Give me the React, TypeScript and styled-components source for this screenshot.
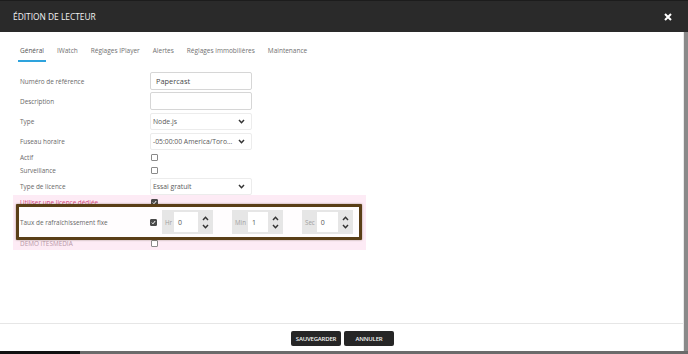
import React from 'react';
import styled, { createGlobalStyle } from 'styled-components';

const GlobalStyle = createGlobalStyle`
  html, body {
    margin: 0;
    padding: 0;
    background: #ffffff;
  }
  body {
    font-family: 'Open Sans', 'Liberation Sans', sans-serif;
  }
`;

interface RowProps {
  h: number;
}

interface TabProps {
  active?: boolean;
}

interface LabelProps {
  tone?: 'normal' | 'alert' | 'faded';
}

const Frame = styled.div`
  display: flex;
  flex-direction: column;
  width: 688px;
  height: 354px;
  overflow: hidden;
`;

const Header = styled.div`
  display: flex;
  align-items: center;
  justify-content: space-between;
  height: 32px;
  padding: 0 16px 0 13px;
  background: #2a2a2a;
  box-sizing: border-box;
  border-top: 1px solid #1c1c1c;
`;

const Title = styled.div`
  color: #f2f2f2;
  font-size: 8.4px;
  text-transform: uppercase;
`;

const Middle = styled.div`
  display: flex;
  flex: 1;
  min-height: 0;
`;

const Panel = styled.div`
  display: flex;
  flex-direction: column;
  flex: 1;
  background: #ffffff;
`;

const Scrollbar = styled.div`
  width: 4px;
  background: #8a8a8a;
  border-left: 1px solid #e9e9e9;
`;

const Tabs = styled.div`
  display: flex;
  gap: 9px;
  margin: 13px 0 0 18px;
`;

const Tab = styled.div<TabProps>`
  padding: 0 2px 3px 2px;
  line-height: 12px;
  font-size: 6.5px;
  color: ${({ active }) => (active ? '#555555' : '#707070')};
  border-bottom: 2px solid ${({ active }) => (active ? '#2ea3dd' : 'transparent')};
`;

const Form = styled.div`
  display: flex;
  flex-direction: column;
  margin-top: 9px;
  padding: 0 20px;
`;

const Row = styled.div<RowProps>`
  display: grid;
  grid-template-columns: 130px 102px;
  align-items: center;
  height: ${({ h }) => h}px;
`;

const Label = styled.div<LabelProps>`
  font-size: 6.4px;
  white-space: nowrap;
  color: ${({ tone }) =>
    tone === 'alert' ? '#d4487c' : tone === 'faded' ? '#b898a8' : '#686868'};
`;

const FixedLabel = styled(Label)`
  width: 129px;
  flex-shrink: 0;
`;

const TextInput = styled.div`
  height: 18px;
  box-sizing: border-box;
  border: 1px solid #d6d6d6;
  border-radius: 2px;
  padding: 0 5px;
  display: flex;
  align-items: center;
  font-size: 7.4px;
  color: #484848;
`;

const Select = styled.div`
  height: 17px;
  box-sizing: border-box;
  border: 1px solid #ececec;
  border-radius: 2px;
  padding: 0 6px 0 2px;
  display: flex;
  align-items: center;
  justify-content: space-between;
  white-space: nowrap;
  font-size: 6.8px;
  color: #5a5a5a;
`;

const Box = styled.span<{ checked?: boolean }>`
  display: inline-flex;
  align-items: center;
  justify-content: center;
  flex-shrink: 0;
  width: 7px;
  height: 7px;
  box-sizing: border-box;
  border: 1px solid ${({ checked }) => (checked ? '#4a4a4a' : '#8a8a8a')};
  border-radius: 1px;
  background: ${({ checked }) => (checked ? '#4a4a4a' : '#ffffff')};
  margin-left: 1px;
`;

const PinkBand = styled.div`
  display: flex;
  flex-direction: column;
  box-sizing: border-box;
  margin-left: -7px;
  padding-left: 7px;
  width: 353px;
  background: #fdebf5;
`;

const Highlight = styled.div`
  position: relative;
  z-index: 1;
  display: flex;
  align-items: center;
  height: 36px;
  width: 346px;
  box-sizing: border-box;
  margin: -6px 0 -4px -4px;
  padding-left: 1px;
  border: 3px solid #5a3f17;
  border-radius: 1px;
  box-shadow: 0 0 2px rgba(60, 40, 10, 0.5);
  background: #fffdfe;
`;

const TimeRow = styled.div`
  display: flex;
  gap: 19px;
  margin-left: 5px;
`;

const Group = styled.div`
  display: flex;
  align-items: center;
  flex-shrink: 0;
  width: 51px;
  height: 24px;
  box-sizing: border-box;
  padding: 2px 0 2px 3px;
  background: #e6e6e6;
`;

const GroupLabel = styled.span`
  font-size: 6.2px;
  color: #a0a0a0;
  margin-right: 2px;
`;

const NumberField = styled.div`
  flex: 1;
  height: 20px;
  background: #ffffff;
  display: flex;
  align-items: center;
  padding-left: 4px;
  font-size: 7px;
  color: #555555;
`;

const Spinner = styled.div`
  display: flex;
  flex-direction: column;
  align-items: center;
  justify-content: center;
  gap: 3px;
  width: 15px;
`;

const Spacer = styled.div`
  flex: 1;
`;

const Footer = styled.div`
  display: flex;
  justify-content: center;
  align-items: flex-start;
  gap: 3px;
  height: 28px;
  box-sizing: border-box;
  padding-top: 7px;
  padding-left: 2px;
  border-top: 1px solid #e6e6e6;
`;

const Button = styled.div`
  width: 50px;
  height: 15px;
  display: flex;
  align-items: center;
  justify-content: center;
  background: #262626;
  border-radius: 2px;
  color: #f4f4f4;
  font-size: 6px;
  font-weight: 600;
  letter-spacing: -0.2px;
`;

const BottomStrip = styled.div`
  display: flex;
  height: 3px;
`;

const StripDark = styled.div`
  width: 80px;
  background: #111111;
`;

const StripGray = styled.div`
  flex: 1;
  background: #6b6b6b;
`;

const Chevron = ({ up }: { up?: boolean }) => (
  <svg width="7" height="5" viewBox="0 0 7 5">
    <path
      d={up ? 'M1 4 L3.5 1.3 L6 4' : 'M1 1 L3.5 3.7 L6 1'}
      fill="none"
      stroke="#333333"
      strokeWidth="1.5"
    />
  </svg>
);

const Check = () => (
  <svg width="5" height="5" viewBox="0 0 5 5">
    <path d="M0.8 2.6 L2 3.8 L4.2 1" fill="none" stroke="#ffffff" strokeWidth="1" />
  </svg>
);

const Close = () => (
  <svg width="8" height="8" viewBox="0 0 8 8">
    <path d="M1 1 L7 7 M7 1 L1 7" stroke="#ffffff" strokeWidth="2" />
  </svg>
);

const tabs = ['Général', 'IWatch', 'Réglages IPlayer', 'Alertes', 'Réglages immobilières', 'Maintenance'];

const times = [
  { label: 'Hr', value: '0' },
  { label: 'Min', value: '1' },
  { label: 'Sec', value: '0' },
];

function App() {
  return (
    <>
      <GlobalStyle />
      <Frame>
        <Header>
          <Title>Édition de lecteur</Title>
          <Close />
        </Header>
        <Middle>
          <Panel>
            <Tabs>
              {tabs.map((t, i) => (
                <Tab key={t} active={i === 0}>
                  {t}
                </Tab>
              ))}
            </Tabs>
            <Form>
              <Row h={20}>
                <Label>Numéro de référence</Label>
                <TextInput>Papercast</TextInput>
              </Row>
              <Row h={20}>
                <Label>Description</Label>
                <TextInput />
              </Row>
              <Row h={20}>
                <Label>Type</Label>
                <Select>
                  Node.js
                  <Chevron />
                </Select>
              </Row>
              <Row h={20}>
                <Label>Fuseau horaire</Label>
                <Select>
                  -05:00:00 America/Toro...
                  <Chevron />
                </Select>
              </Row>
              <Row h={13}>
                <Label>Actif</Label>
                <Box />
              </Row>
              <Row h={13}>
                <Label>Surveillance</Label>
                <Box />
              </Row>
              <Row h={18}>
                <Label>Type de licence</Label>
                <Select>
                  Essai gratuit
                  <Chevron />
                </Select>
              </Row>
              <PinkBand>
                <Row h={15}>
                  <Label tone="alert">Utiliser une licence dédiée</Label>
                  <Box checked>
                    <Check />
                  </Box>
                </Row>
                <Highlight>
                  <FixedLabel>Taux de rafraîchissement fixe</FixedLabel>
                  <Box checked>
                    <Check />
                  </Box>
                  <TimeRow>
                    {times.map((t) => (
                      <Group key={t.label}>
                        <GroupLabel>{t.label}</GroupLabel>
                        <NumberField>{t.value}</NumberField>
                        <Spinner>
                          <Chevron up />
                          <Chevron />
                        </Spinner>
                      </Group>
                    ))}
                  </TimeRow>
                </Highlight>
                <Row h={14}>
                  <Label tone="faded">DEMO ITESMEDIA</Label>
                  <Box />
                </Row>
              </PinkBand>
            </Form>
            <Spacer />
            <Footer>
              <Button>SAUVEGARDER</Button>
              <Button>ANNULER</Button>
            </Footer>
          </Panel>
          <Scrollbar />
        </Middle>
        <BottomStrip>
          <StripDark />
          <StripGray />
        </BottomStrip>
      </Frame>
    </>
  );
}

export default App;
